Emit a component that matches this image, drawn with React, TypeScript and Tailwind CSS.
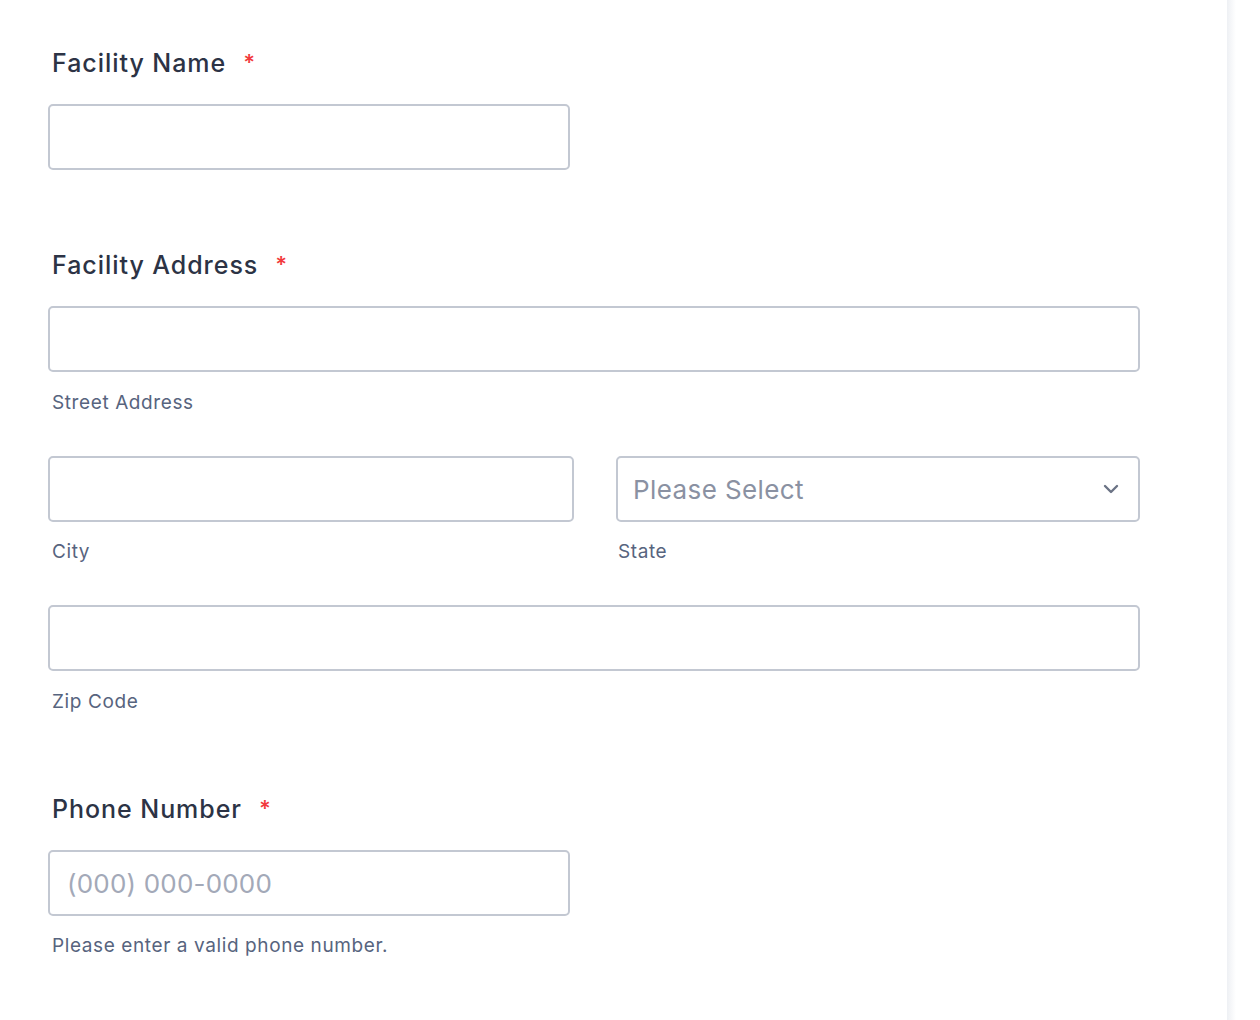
import React from "react";

const font = { fontFamily: "Inter, 'Noto Sans', sans-serif" };

function Label({ text }: { text: string }) {
  return (
    <div className="flex items-center pl-1 h-[32px] text-[25px] tracking-[0.95px] font-medium text-[#2c3345] leading-[32px]">
      <span>{text}</span>
      <span className="ml-[17px] text-[22px] font-semibold text-[#f23a3c] leading-none mt-[-2px]">*</span>
    </div>
  );
}

function Sub({ text, className = "" }: { text: string; className?: string }) {
  return (
    <div className={"pl-1 h-[24px] text-[19px] tracking-[0.6px] leading-[24px] text-[#57647e] " + className}>{text}</div>
  );
}

function Input({ className = "", placeholder }: { className?: string; placeholder?: string }) {
  return (
    <div
      className={
        "h-[66px] border-2 border-[#c3c8d2] rounded-[5px] bg-white flex items-center pl-[17px] text-[26px] tracking-[0.2px] text-[#a3a9b8] " +
        className
      }
    >
      {placeholder}
    </div>
  );
}

export default function App() {
  return (
    <div className="w-[1260px] h-[1020px] bg-white flex" style={font}>
      <div className="w-[1227px] h-full pl-[48px] pt-[47px]">
        <Label text="Facility Name" />
        <Input className="w-[522px] mt-[25px]" />

        <div className="mt-[79px]">
          <Label text="Facility Address" />
        </div>
        <Input className="w-[1092px] mt-[25px]" />
        <Sub text="Street Address" className="mt-[19px]" />

        <div className="flex gap-[42px] w-[1092px] mt-[41px]">
          <div className="w-[526px]">
            <Input />
            <Sub text="City" className="mt-[18px]" />
          </div>
          <div className="flex-1">
            <div className="h-[66px] border-2 border-[#c3c8d2] rounded-[5px] bg-white flex items-center justify-between pl-[15px] pr-[18px]">
              <span className="text-[26px] tracking-[0.4px] text-[#8a91a2]">Please Select</span>
              <svg width="18" height="12" viewBox="0 0 18 12" fill="none">
                <path d="M3 3l6 6 6-6" stroke="#6b7385" strokeWidth="2.4" strokeLinecap="round" strokeLinejoin="round" />
              </svg>
            </div>
            <Sub text="State" className="mt-[18px] pl-[2px]" />
          </div>
        </div>

        <Input className="w-[1092px] mt-[41px]" />
        <Sub text="Zip Code" className="mt-[19px]" />

        <div className="mt-[79px]">
          <Label text="Phone Number" />
        </div>
        <Input className="w-[522px] mt-[25px]" placeholder="(000) 000-0000" />
        <Sub text="Please enter a valid phone number." className="mt-[18px]" />
      </div>
      <div className="w-[9px] h-full bg-gradient-to-r from-[#eef0f4] to-white" />
    </div>
  );
}
